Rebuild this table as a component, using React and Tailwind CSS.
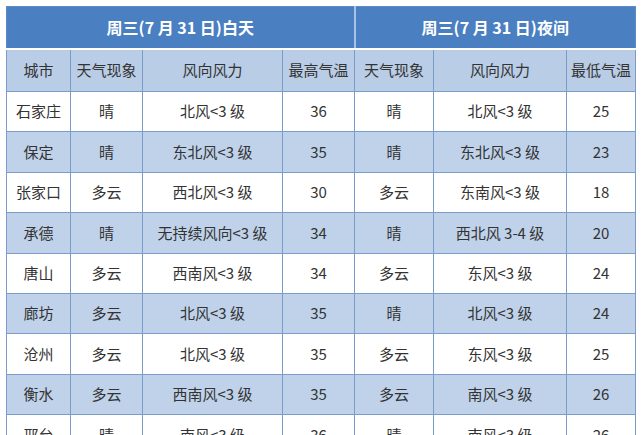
import React from "react";

const rows = [
  ["石家庄", "晴", "北风<3 级", "36", "晴", "北风<3 级", "25"],
  ["保定", "晴", "东北风<3 级", "35", "晴", "东北风<3 级", "23"],
  ["张家口", "多云", "西北风<3 级", "30", "多云", "东南风<3 级", "18"],
  ["承德", "晴", "无持续风向<3 级", "34", "晴", "西北风 3-4 级", "20"],
  ["唐山", "多云", "西南风<3 级", "34", "多云", "东风<3 级", "24"],
  ["廊坊", "多云", "北风<3 级", "35", "晴", "北风<3 级", "24"],
  ["沧州", "多云", "北风<3 级", "35", "多云", "东风<3 级", "25"],
  ["衡水", "多云", "西南风<3 级", "35", "多云", "南风<3 级", "26"],
  ["邢台", "晴", "南风<3 级", "36", "晴", "南风<3 级", "26"],
];

const headers = ["城市", "天气现象", "风向风力", "最高气温", "天气现象", "风向风力", "最低气温"];
const widths = [64, 72, 140, 72, 79, 133, 69];

const App = () => {
  return (
    <div
      className="w-[641px] h-[435px] overflow-hidden bg-white pt-[6px] pl-[6px]"
      style={{ fontFamily: '"Noto Sans CJK SC", "Noto Sans", sans-serif' }}
    >
      <table className="border-collapse table-fixed w-[630px] text-[#333] text-[15px]">
        <colgroup>
          {widths.map((w, i) => (
            <col key={i} style={{ width: w }} />
          ))}
        </colgroup>
        <thead>
          <tr className="h-[42px] bg-[#4a7fc1] text-white text-[16px] font-bold">
            <th colSpan={4} className="border border-[#5d8bc4] border-r-2 border-r-[#a9c3e5] border-b-2 border-b-white">
              周三(7 月 31 日)白天
            </th>
            <th colSpan={3} className="border border-[#5d8bc4] border-b-2 border-b-white">
              周三(7 月 31 日)夜间
            </th>
          </tr>
          <tr className="h-[43px] bg-[#b9cde6]">
            {headers.map((h, i) => (
              <th key={i} className="border border-[#7a9cc8] font-normal whitespace-nowrap">
                {h}
              </th>
            ))}
          </tr>
        </thead>
        <tbody>
          {rows.map((r, ri) => (
            <tr key={ri} className={ri % 2 === 1 ? "h-[40.4px] bg-[#bfd2ea]" : "h-[40.4px] bg-white"}>
              {r.map((c, ci) => (
                <td key={ci} className="border border-[#7a9cc8] text-center whitespace-nowrap">
                  {c}
                </td>
              ))}
            </tr>
          ))}
        </tbody>
      </table>
    </div>
  );
};

export default App;
